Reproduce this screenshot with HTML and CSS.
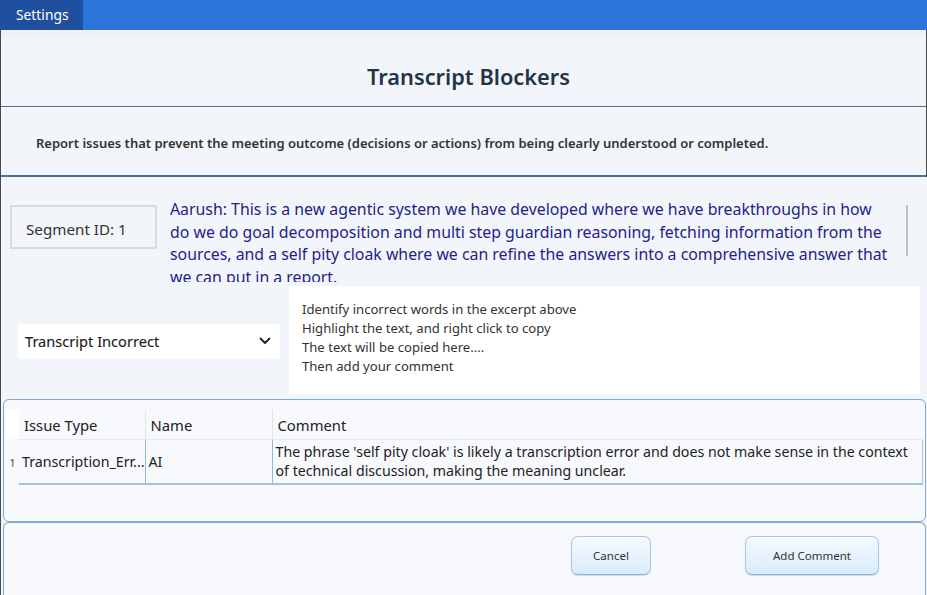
FILE: index.html
```html
<!DOCTYPE html>
<html lang="en">
<head>
<meta charset="utf-8">
<title>Transcript Blockers</title>
<link rel="stylesheet" href="styles.css">
</head>
<body>
<div class="topbar">
  <div class="tab">Settings</div>
</div>
<div class="window">
  <div class="header">
    <div class="strip"></div>
    <div class="title-area"><h1 class="title">Transcript Blockers</h1></div>
    <div class="desc">Report issues that prevent the meeting outcome (decisions or actions) from being clearly understood or completed.</div>
  </div>
  <div class="segment-row">
    <div class="segment-box">Segment ID: 1</div>
    <div class="transcript">
      <span class="tline">Aarush: This is a new agentic system we have developed where we have breakthroughs in how</span>
      <span class="tline">do we do goal decomposition and multi step guardian reasoning, fetching information from the</span>
      <span class="tline">sources, and a self pity cloak where we can refine the answers into a comprehensive answer that</span>
      <span class="tline">we can put in a report.</span>
    </div>
    <div class="scrollbar"></div>
  </div>
  <div class="form-row">
    <div class="select">
      <span>Transcript Incorrect</span>
      <svg class="chev" width="12" height="8" viewBox="0 0 12 8"><path d="M1.5 1.5 L6 6 L10.5 1.5" fill="none" stroke="#222" stroke-width="1.8" stroke-linecap="round" stroke-linejoin="round"/></svg>
    </div>
    <div class="comment-box">
      <div>Identify incorrect words in the excerpt above</div>
      <div>Highlight the text, and right click to copy</div>
      <div>The text will be copied here....</div>
      <div>Then add your comment</div>
    </div>
  </div>
  <div class="table-panel">
    <table class="grid">
      <colgroup>
        <col class="c-num"><col class="c-type"><col class="c-name"><col class="c-comment">
      </colgroup>
      <thead>
        <tr>
          <th class="num"></th>
          <th>Issue Type</th>
          <th class="sep">Name</th>
          <th class="sep">Comment</th>
        </tr>
      </thead>
      <tbody>
        <tr>
          <td class="num">1</td>
          <td class="cell">Transcription_Err...</td>
          <td class="cell bl">AI</td>
          <td class="cell bl last">The phrase 'self pity cloak' is likely a transcription error and does not make sense in the context of technical discussion, making the meaning unclear.</td>
        </tr>
      </tbody>
    </table>
  </div>
  <div class="button-panel">
    <button class="btn btn-cancel">Cancel</button>
    <button class="btn btn-add">Add Comment</button>
  </div>
</div>
</body>
</html>
```

FILE: styles.css
```css
* { box-sizing: border-box; }

html, body {
  margin: 0;
  padding: 0;
}

body {
  width: 927px;
  height: 595px;
  overflow: hidden;
  background: #f2f6fb;
  font-family: "Noto Sans", "Open Sans", sans-serif;
  color: #333;
}

.topbar {
  height: 30px;
  background: #2c74d8;
  display: flex;
}

.tab {
  width: 83px;
  background: #1f4f9e;
  color: #fff;
  font-size: 13.8px;
  line-height: 30px;
  padding-left: 16px;
}

.window {
  border-left: 1px solid #4a4a4a;
  height: 565px;
}

.header {
  border-right: 1px solid #4a4a4a;
}

.strip {
  height: 7px;
  background: #eff1f5;
}

.title-area {
  height: 70px;
  border-bottom: 1px solid #4f6f8d;
  display: flex;
  justify-content: center;
  padding: 25px 0 0 10px;
}

.title {
  margin: 0;
  font-size: 21.8px;
  line-height: 30px;
  font-weight: 600;
  color: #243447;
}

.desc {
  height: 70px;
  border-bottom: 2px solid #4a7393;
  padding: 27px 0 0 35px;
  font-size: 13px;
  line-height: 18px;
  font-weight: 600;
  color: #333;
}

.segment-row {
  height: 109px;
  display: flex;
  align-items: flex-start;
}

.segment-box {
  margin: 28px 0 0 9px;
  width: 147px;
  height: 44px;
  border: 2px solid #d8dce2;
  font-size: 15.2px;
  line-height: 36px;
  padding: 4px 0 0 14px;
  color: #333;
}

.transcript {
  margin: 21px 0 0 13px;
  width: 730px;
  height: 84px;
  overflow: hidden;
  font-size: 15.85px;
  line-height: 22.5px;
  color: #221e8a;
}

.tline {
  display: block;
  white-space: nowrap;
}

.scrollbar {
  margin: 28px 0 0 6px;
  width: 2px;
  height: 51px;
  background: #c2c2c2;
}

.form-row {
  height: 110px;
  display: flex;
  align-items: center;
}

.select {
  margin-left: 17px;
  width: 262px;
  height: 35px;
  background: #fff;
  border-radius: 3px;
  display: flex;
  align-items: center;
  justify-content: space-between;
  padding: 0 9px 0 7px;
  font-size: 14.6px;
  font-weight: 400;
  -webkit-text-stroke: 0.12px #1a1a1a;
  color: #1a1a1a;
}

.chev {
  display: block;
}

.comment-box {
  margin-left: 9px;
  width: 631px;
  height: 108px;
  align-self: flex-start;
  background: #fff;
  padding: 14px 0 0 13px;
  font-size: 13.1px;
  line-height: 19px;
  color: #333;
}

.table-panel {
  margin: 3px 0 0 2px;
  width: 923px;
  height: 123px;
  border: 1px solid #7ea7d3;
  border-radius: 6px;
  background: #f7f9fd;
  padding: 10px 0 0 2px;
}

.grid {
  width: 916px;
  table-layout: fixed;
  border-collapse: collapse;
  font-size: 14.2px;
  color: #222;
}

.c-num { width: 13px; }
.c-type { width: 126px; }
.c-name { width: 127px; }
.c-comment { width: 650px; }

.grid th {
  height: 29px;
  font-size: 14.8px;
  font-weight: 400;
  text-align: left;
  padding: 2px 5px 0;
  border-bottom: 1px solid #e3e9f1;
  white-space: nowrap;
}

.grid th.num {
  background: #fff;
  border-bottom: none;
}

.grid th.sep {
  border-left: 1px solid #e1e6ee;
}

.grid td {
  height: 45px;
  vertical-align: middle;
}

.grid td.num {
  font-size: 10.5px;
  text-align: center;
  color: #444;
  padding: 3px 0 0 0;
}

.grid td.cell {
  padding: 0 2px 0 3px;
  line-height: 19px;
  border-bottom: 2px solid #a3c3e3;
  white-space: nowrap;
}

.grid td.bl {
  border-left: 1px solid #8dbae9;
}

.grid td.last {
  white-space: normal;
  border-right: 1px solid #a9c7e6;
}

.button-panel {
  margin-left: 2px;
  width: 923px;
  height: 80px;
  border: 1px solid #7ea7d3;
  border-bottom: none;
  border-radius: 6px 6px 0 0;
  background: #f7f9fd;
  display: flex;
  align-items: flex-start;
  padding: 13px 0 0 567px;
  gap: 94px;
}

.btn {
  height: 39px;
  border: 1px solid #a8c7e5;
  border-bottom-color: #8fb3d6;
  border-radius: 7px;
  background: linear-gradient(#f5faff, #d9ebfa);
  box-shadow: 0 1px 1px rgba(90, 130, 170, 0.25);
  font-family: "Noto Sans", "Open Sans", sans-serif;
  font-size: 11.5px;
  color: #333;
  padding: 0;
}

.btn-cancel { width: 80px; }
.btn-add { width: 134px; }
```
